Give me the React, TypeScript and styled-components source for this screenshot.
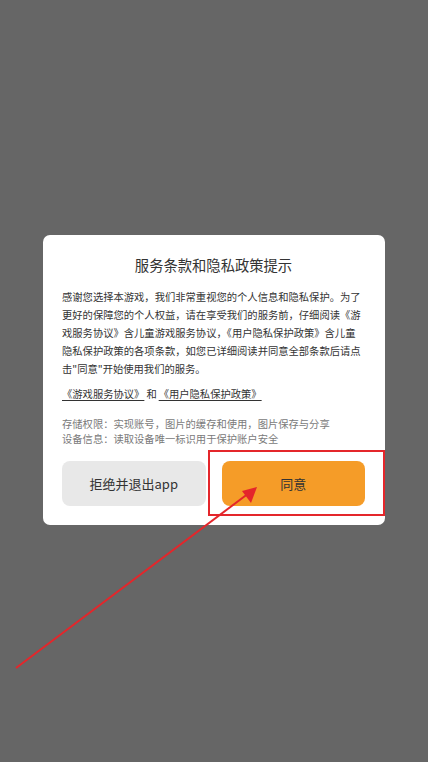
import { createGlobalStyle, styled } from "styled-components";

const GlobalStyle = createGlobalStyle`
  html, body {
    margin: 0;
    padding: 0;
    background: #666666;
  }
  body {
    font-family: "Noto Sans CJK SC", "Noto Sans", sans-serif;
  }
`;

const Screen = styled.div`
  position: relative;
  width: 428px;
  height: 762px;
  background: #666666;
  padding-top: 235px;
  box-sizing: border-box;
  overflow: hidden;
`;

const Dialog = styled.div`
  width: 342px;
  margin-left: 43px;
  box-sizing: border-box;
  padding: 19px 20px 19px 19px;
  background: #ffffff;
  border-radius: 7px;
  display: flex;
  flex-direction: column;
`;

const Title = styled.div`
  text-align: center;
  font-size: 14.3px;
  line-height: 22px;
  color: #333333;
`;

const Body = styled.div`
  margin-top: 12px;
  width: 300px;
  font-size: 10.3px;
  line-height: 18px;
  color: #333333;
  display: flex;
  flex-direction: column;
  align-items: flex-start;
`;

const Line = styled.span`
  white-space: nowrap;
`;

const Links = styled.div`
  margin-top: 8px;
  font-size: 10.3px;
  line-height: 16px;
  color: #333333;
`;

const DocLink = styled.span`
  text-decoration: underline;
  text-underline-offset: 2px;
`;

const Joiner = styled.span`
  margin: 0 2px;
`;

const Info = styled.div`
  margin-top: 14px;
  font-size: 10.3px;
  line-height: 15px;
  color: #7a7a7a;
`;

const Actions = styled.div`
  margin-top: 15px;
  display: flex;
  gap: 16px;
`;

const Button = styled.button<{ $primary?: boolean }>`
  flex: 1;
  height: 45px;
  border: none;
  border-radius: 8px;
  font-family: inherit;
  font-size: 13px;
  color: #333333;
  background: ${({ $primary }) => ($primary ? "#f59c28" : "#e8e8e8")};
`;

const Highlight = styled.div`
  position: absolute;
  left: 208px;
  top: 450px;
  width: 177px;
  height: 66px;
  box-sizing: border-box;
  border: 2px solid #e4262b;
  pointer-events: none;
`;

const Overlay = styled.svg`
  position: absolute;
  left: 0;
  top: 0;
  pointer-events: none;
`;

const bodyLines = [
  "感谢您选择本游戏，我们非常重视您的个人信息和隐私保护。为了",
  "更好的保障您的个人权益，请在享受我们的服务前，仔细阅读《游",
  "戏服务协议》含儿童游戏服务协议，《用户隐私保护政策》含儿童",
  "隐私保护政策的各项条款，如您已详细阅读并同意全部条款后请点",
  "击\"同意\"开始使用我们的服务。",
];

export default function App() {
  return (
    <>
      <GlobalStyle />
      <Screen>
        <Dialog>
          <Title>服务条款和隐私政策提示</Title>
          <Body>
            {bodyLines.map((line, i) => (
              <Line key={i}>{line}</Line>
            ))}
          </Body>
          <Links>
            <DocLink>《游戏服务协议》</DocLink>
            <Joiner>和</Joiner>
            <DocLink>《用户隐私保护政策》</DocLink>
          </Links>
          <Info>
            存储权限：实现账号，图片的缓存和使用，图片保存与分享
            <br />
            设备信息：读取设备唯一标识用于保护账户安全
          </Info>
          <Actions>
            <Button>拒绝并退出app</Button>
            <Button $primary>同意</Button>
          </Actions>
        </Dialog>
        <Highlight />
        <Overlay width="428" height="762" viewBox="0 0 428 762">
          <line x1="16" y1="668" x2="249" y2="493" stroke="#e4262b" strokeWidth="2" />
          <polygon points="257,487 242,491 251,503" fill="#e4262b" />
        </Overlay>
      </Screen>
    </>
  );
}
